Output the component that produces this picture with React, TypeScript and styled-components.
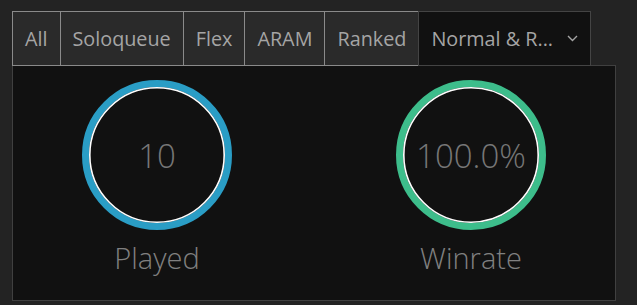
import React, { useState } from 'react';
import styled, { createGlobalStyle } from 'styled-components';

const GlobalStyle = createGlobalStyle`
  html, body {
    margin: 0;
    padding: 0;
    background: #232323;
    font-family: 'Open Sans', 'Liberation Sans', sans-serif;
  }
`;

const Page = styled.div`
  padding: 11px 12px;
  width: 604px;
`;

const TabBar = styled.div`
  display: flex;
  align-items: stretch;
  height: 55px;
  margin-bottom: -1px;
  position: relative;
  z-index: 1;
`;

const Tab = styled.button<{ $active?: boolean }>`
  display: flex;
  align-items: center;
  gap: 14px;
  padding: 0 12px;
  margin-left: -1px;
  border: 1px solid ${(p) => (p.$active ? '#444' : '#8a8a8a')};
  background: ${(p) => (p.$active ? '#111' : '#2a2a2a')};
  color: #a5a5a5;
  font-family: 'Open Sans', 'Liberation Sans', sans-serif;
  font-size: 19.8px;
  cursor: pointer;

  &:first-child {
    margin-left: 0;
  }
`;

const Panel = styled.div`
  background: #111;
  border: 1px solid #404040;
  height: 220px;
  padding: 14px 69px 0;
  display: flex;
  justify-content: space-between;
  align-items: flex-start;
`;

const Stat = styled.div`
  display: flex;
  flex-direction: column;
  align-items: center;
`;

const Ring = styled.div`
  position: relative;
  width: 150px;
  height: 150px;
  display: flex;
  align-items: center;
  justify-content: center;

  svg {
    position: absolute;
    inset: 0;
  }
`;

const Value = styled.span`
  position: relative;
  font-size: 33px;
  font-weight: 300;
  color: #777;
`;

const Label = styled.div`
  margin-top: 8px;
  font-size: 29px;
  font-weight: 300;
  color: #808080;
`;

const tabs = ['All', 'Soloqueue', 'Flex', 'ARAM', 'Ranked'];

const StatRing: React.FC<{ color: string; value: string; label: string }> = ({ color, value, label }) => (
  <Stat>
    <Ring>
      <svg width="150" height="150" viewBox="0 0 150 150">
        <circle cx="75" cy="75" r="71.5" fill="none" stroke={color} strokeWidth="7" />
        <circle cx="75" cy="75" r="67.2" fill="none" stroke="#fff" strokeWidth="1.6" />
      </svg>
      <Value>{value}</Value>
    </Ring>
    <Label>{label}</Label>
  </Stat>
);

const App: React.FC = () => {
  const [active, setActive] = useState<string>('normal');

  return (
    <>
      <GlobalStyle />
      <Page>
        <TabBar>
          {tabs.map((t) => (
            <Tab key={t} $active={active === t} onClick={() => setActive(t)}>
              {t}
            </Tab>
          ))}
          <Tab $active={active === 'normal'} onClick={() => setActive('normal')}>
            Normal &amp; R...
            <svg width="11" height="7" viewBox="0 0 11 7">
              <path d="M1 1 L5.5 5.5 L10 1" fill="none" stroke="#a5a5a5" strokeWidth="1.4" />
            </svg>
          </Tab>
        </TabBar>
        <Panel>
          <StatRing color="#2a9dc5" value="10" label="Played" />
          <StatRing color="#3dbd8b" value="100.0%" label="Winrate" />
        </Panel>
      </Page>
    </>
  );
};

export default App;
